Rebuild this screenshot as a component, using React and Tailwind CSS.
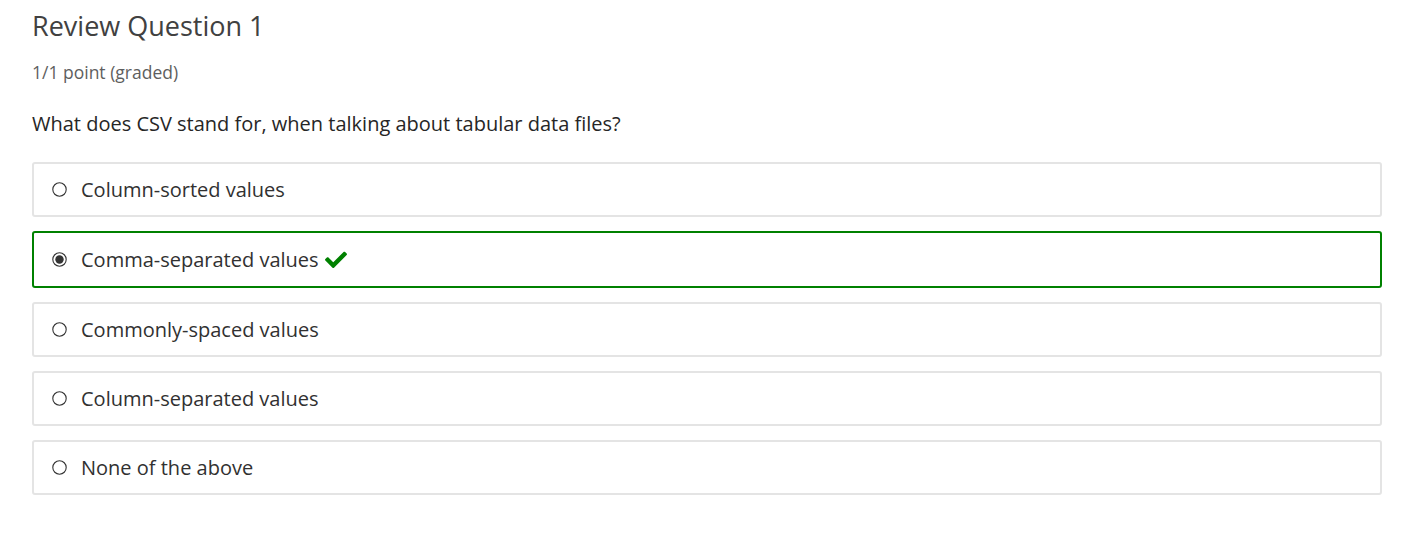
import React from "react";

const options = [
  { label: "Column-sorted values", checked: false },
  { label: "Comma-separated values", checked: true },
  { label: "Commonly-spaced values", checked: false },
  { label: "Column-separated values", checked: false },
  { label: "None of the above", checked: false },
];

function Radio({ checked }) {
  return (
    <svg width="15" height="15" viewBox="0 0 15 15" className="shrink-0">
      <circle cx="7.5" cy="7.5" r="6.7" fill="white" stroke="#333" strokeWidth="1.1" />
      {checked && <circle cx="7.5" cy="7.5" r="4.2" fill="#333" />}
    </svg>
  );
}

function Check() {
  return (
    <svg width="22" height="18" viewBox="0 0 512 420" className="ml-[6px]">
      <path
        fill="#008100"
        d="M173.9 389.4l-166.4-166.4c-10-10-10-26.2 0-36.2l36.2-36.2c10-10 26.2-10 36.2 0L192 262.7 432.1 22.6c10-10 26.2-10 36.2 0l36.2 36.2c10 10 10 26.2 0 36.2L210.1 389.4c-10 10-26.2 10-36.2 0z"
      />
    </svg>
  );
}

export default function App() {
  return (
    <div
      className="bg-white w-[1406px] h-[539px] px-[32px] pt-[8px]"
      style={{ fontFamily: '"Open Sans", sans-serif' }}
    >
      <h2 className="text-[27px] leading-[36px] text-[#414141] font-normal">Review Question 1</h2>
      <div className="mt-[17px] text-[17.5px] leading-[22px] text-[#5e5e5e]">1/1 point (graded)</div>
      <p className="mt-[27px] text-[20px] leading-[28px] text-[#262626]">
        What does CSV stand for, when talking about tabular data files?
      </p>
      <div className="mt-[24px] flex flex-col gap-[14px] w-[1350px]">
        {options.map((o) => (
          <div
            key={o.label}
            className={
              "rounded-[3px] border-2 flex items-center pl-[18px] " +
              (o.checked ? "h-[57px] border-[#008100]" : "h-[55px] border-[#e4e4e4]")
            }
          >
            <Radio checked={o.checked} />
            <span className="ml-[14px] text-[20px] text-[#313131]">{o.label}</span>
            {o.checked && <Check />}
          </div>
        ))}
      </div>
    </div>
  );
}
